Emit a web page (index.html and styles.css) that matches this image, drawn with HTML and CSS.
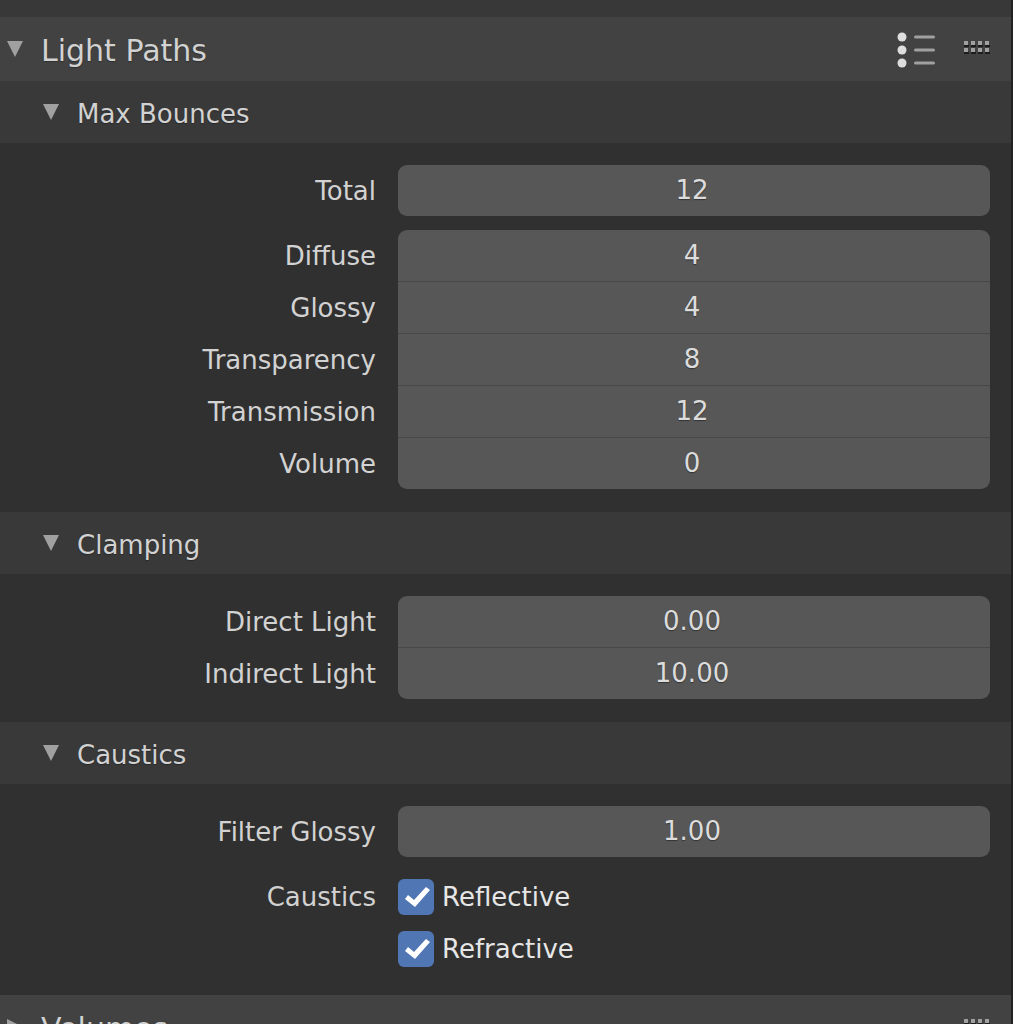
FILE: index.html
```
<!DOCTYPE html>
<html lang="en">
<head>
    <meta charset="UTF-8">
    <meta name="viewport" content="width=device-width, initial-scale=1.0">
    <title>Light Paths</title>
    <link rel="stylesheet" href="styles.css">
</head>
<body>
    <main class="editor">
        <section class="panel">
            <header class="panel-header">
                <button class="toggle" type="button" aria-expanded="true">
                    <svg class="arrow" viewBox="0 0 16 16"><path d="M0 0h16L8 16z"/></svg>
                    Light Paths
                </button>
                <button class="icon-button presets" type="button" aria-label="Presets">
                    <svg width="40" height="38" viewBox="0 -2 40 38">
                        <g fill="#dedede"><circle cx="5" cy="5" r="4.500"/><circle cx="5" cy="18" r="4.500"/><circle cx="5" cy="31" r="4.500"/></g>
                        <g stroke="#a0a0a0" stroke-width="3" stroke-linecap="round"><path d="M18.500 5H36.500M18.500 18H36.500M18.500 31H36.500"/></g>
                    </svg>
                </button>
                <button class="icon-button grip" type="button" aria-label="Move panel">
                    <svg width="26" height="16" viewBox="0 0 26 16">
                        <path fill="#1c1c1c" d="M0 4h5v2H0zM7 4h5v2H7zM14 4h5v2h-5zM21 4h5v2h-5zM0 11h5v2H0zM7 11h5v2H7zM14 11h5v2h-5zM21 11h5v2h-5z"/>
                        <path fill="#a0a0a0" d="M0 0h4v4H0zM7 0h4v4H7zM14 0h4v4h-4zM21 0h4v4h-4zM0 7h4v4H0zM7 7h4v4H7zM14 7h4v4h-4zM21 7h4v4h-4z"/>
                    </svg>
                </button>
            </header>

            <header class="sub-header">
                <button class="toggle" type="button" aria-expanded="true">
                    <svg class="arrow" viewBox="0 0 16 16"><path d="M0 0h16L8 16z"/></svg>
                    Max Bounces
                </button>
            </header>
            <div class="panel-body">
                <div class="group">
                    <div class="row"><label for="total">Total</label><input class="field" id="total" type="text" value="12"></div>
                </div>
                <div class="group">
                    <div class="row"><label for="diffuse">Diffuse</label><input class="field" id="diffuse" type="text" value="4"></div>
                    <div class="row"><label for="glossy">Glossy</label><input class="field" id="glossy" type="text" value="4"></div>
                    <div class="row"><label for="transparency">Transparency</label><input class="field" id="transparency" type="text" value="8"></div>
                    <div class="row"><label for="transmission">Transmission</label><input class="field" id="transmission" type="text" value="12"></div>
                    <div class="row"><label for="volume">Volume</label><input class="field" id="volume" type="text" value="0"></div>
                </div>
            </div>

            <header class="sub-header">
                <button class="toggle" type="button" aria-expanded="true">
                    <svg class="arrow" viewBox="0 0 16 16"><path d="M0 0h16L8 16z"/></svg>
                    Clamping
                </button>
            </header>
            <div class="panel-body">
                <div class="group">
                    <div class="row"><label for="direct">Direct Light</label><input class="field" id="direct" type="text" value="0.00"></div>
                    <div class="row"><label for="indirect">Indirect Light</label><input class="field" id="indirect" type="text" value="10.00"></div>
                </div>
            </div>

            <header class="sub-header">
                <button class="toggle" type="button" aria-expanded="true">
                    <svg class="arrow" viewBox="0 0 16 16"><path d="M0 0h16L8 16z"/></svg>
                    Caustics
                </button>
            </header>
            <div class="panel-body">
                <div class="group">
                    <div class="row"><label for="filter">Filter Glossy</label><input class="field" id="filter" type="text" value="1.00"></div>
                </div>
                <div class="group">
                    <div class="row">
                        <span class="caption">Caustics</span>
                        <label class="check"><input type="checkbox" checked>Reflective</label>
                    </div>
                    <div class="row">
                        <span class="caption"></span>
                        <label class="check"><input type="checkbox" checked>Refractive</label>
                    </div>
                </div>
            </div>
        </section>

        <section class="panel">
            <header class="panel-header">
                <button class="toggle" type="button" aria-expanded="false">
                    <svg class="arrow" viewBox="0 0 16 16"><path d="M0 0v16L16 8z"/></svg>
                    Volumes
                </button>
                <button class="icon-button grip" type="button" aria-label="Move panel">
                    <svg width="26" height="16" viewBox="0 0 26 16">
                        <path fill="#1c1c1c" d="M0 4h5v2H0zM7 4h5v2H7zM14 4h5v2h-5zM21 4h5v2h-5zM0 11h5v2H0zM7 11h5v2H7zM14 11h5v2h-5zM21 11h5v2h-5z"/>
                        <path fill="#a0a0a0" d="M0 0h4v4H0zM7 0h4v4H7zM14 0h4v4h-4zM21 0h4v4h-4zM0 7h4v4H0zM7 7h4v4H7zM14 7h4v4h-4zM21 7h4v4h-4z"/>
                    </svg>
                </button>
            </header>
        </section>
    </main>
</body>
</html>
```
FILE: styles.css
```
* {
    box-sizing: border-box;
}
body {
    margin: 0;
    background: #383838;
    color: #d2d2d2;
    font-family: "DejaVu Sans", sans-serif;
    font-size: 26px;
    line-height: 32px;
}
.editor {
    height: 100vh;
    padding-top: 17px;
    border-right: 2px solid #222;
    overflow: hidden;
}
.panel {
    background: #303030;
}
.panel-header {
    display: flex;
    align-items: center;
    height: 64px;
    padding: 0 21px 0 7px;
    background: #424242;
}
.panel-header .toggle {
    flex: 1;
    font-size: 30px;
}
.sub-header {
    display: flex;
    align-items: center;
    height: 62px;
    padding-left: 43px;
    background: #393939;
}
button {
    border: none;
    padding: 0;
    background: none;
    color: inherit;
    font: inherit;
}
.toggle {
    display: flex;
    align-items: center;
    gap: 18px;
    padding-top: 4px;
    text-align: left;
    text-shadow: 0 1px 1px rgba(0, 0, 0, 0.3);
}
.arrow {
    width: 16px;
    height: 16px;
    fill: #a0a0a0;
    margin-bottom: 4px;
}
.icon-button {
    display: flex;
}
.grip {
    margin-left: 27px;
}
.panel-body {
    display: flex;
    flex-direction: column;
    gap: 14px;
    padding: 22px 21px 23px 0;
}
.panel-body:last-child {
    padding-bottom: 20px;
}
.row {
    display: grid;
    grid-template-columns: 47fr 74fr;
    column-gap: 22px;
    align-items: center;
}
.row label,
.caption {
    text-align: right;
}
.row + .row label:first-child {
    padding-top: 2px;
}
.field {
    width: 100%;
    height: 51px;
    border: none;
    border-radius: 0;
    padding: 0 4px 2px 0;
    background: #575757;
    color: #dcdcdc;
    font: inherit;
    text-align: center;
    text-shadow: 0 1px 1px rgba(0, 0, 0, 0.4);
}
.row + .row .field {
    height: 52px;
    border-top: 1px solid #484848;
}
.row:first-child .field {
    border-top-left-radius: 9px;
    border-top-right-radius: 9px;
}
.row:last-child .field {
    border-bottom-left-radius: 9px;
    border-bottom-right-radius: 9px;
}
.row .check {
    display: flex;
    align-items: center;
    gap: 8px;
    height: 52px;
    color: #e6e6e6;
    text-align: left;
}
.check input {
    appearance: none;
    width: 36px;
    height: 36px;
    margin: 0;
    border-radius: 6px;
    background: #5077b3;
}
.check input:checked::before {
    content: "";
    display: block;
    height: 100%;
    background: #fff;
    clip-path: polygon(7px 20px, 10px 16px, 16px 21px, 28px 8px, 32px 11px, 17px 28px);
}
```
